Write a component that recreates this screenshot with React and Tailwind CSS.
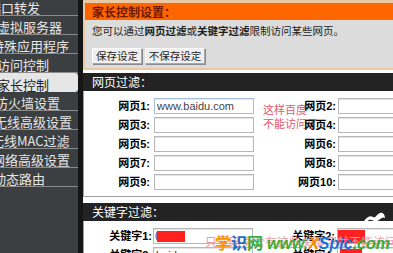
const items = [
  { t: '端口转发', o: '-ml-[12px]' },
  { t: '虚拟服务器', o: '-ml-[3px]' },
  { t: '特殊应用程序', o: '-ml-[9px]' },
  { t: '访问控制', o: '-ml-[3px]' },
  { t: '家长控制', o: '-ml-[3px]', active: true },
  { t: '防火墙设置', o: '-ml-[5px]' },
  { t: '无线高级设置', o: '-ml-[6px]' },
  { t: '无线MAC过滤', o: '-ml-[9px]' },
  { t: '网络高级设置', o: '-ml-[8px]' },
  { t: '动态路由', o: '-ml-[7px]' },
];

const webRows = [
  ['网页1:', '网页2:'],
  ['网页3:', '网页4:'],
  ['网页5:', '网页6:'],
  ['网页7:', '网页8:'],
  ['网页9:', '网页10:'],
];

const inputCls =
  'h-[16px] w-[100px] shrink-0 border border-[#b7b7b7] bg-white shadow-[inset_0_1px_1px_rgba(0,0,0,0.12)] flex items-center overflow-hidden';
const labelCls =
  "relative shrink-0 text-right text-[11px] font-bold leading-none text-black whitespace-nowrap font-['Liberation_Sans','Noto_Sans_CJK_SC',sans-serif]";

export default function App() {
  return (
    <div className="relative flex h-[253px] w-[393px] overflow-hidden bg-white font-['Noto_Sans_CJK_SC',sans-serif]">
      <aside className="w-[78px] shrink-0 overflow-hidden bg-[#3c3f41]">
        <ul className="-mt-[3px]">
          {items.map((it) => (
            <li
              key={it.t}
              className={
                it.active
                  ? 'flex h-[19px] items-center overflow-hidden whitespace-nowrap rounded-r-[3px] bg-[#e6e6e6] pt-[3px] text-[13px] leading-none text-[#222]'
                  : 'flex h-[19px] items-center overflow-hidden whitespace-nowrap border-b border-[#8b8b8b] pt-[3px] text-[13px] leading-none text-[#e6e6e6]'
              }
            >
              <span className={it.o}>{it.t}</span>
            </li>
          ))}
        </ul>
      </aside>
      <div className="w-[5px] shrink-0 bg-[#161616]" />
      <main className="min-w-0 flex-1 overflow-hidden">
        <div className="w-[420px]">
          <section className="border-b-2 border-l-2 border-t-[3px] border-[#e8c9a4]">
            <div className="flex h-[17px] items-center bg-[#ff6600] pl-[7px] text-[12px] font-bold leading-none text-[#6e1800]">
              家长控制设置：
            </div>
            <div className="h-[48px] bg-[#dcdcdc] pl-[7px] pt-[5px]">
              <p className="whitespace-nowrap text-[10.5px] leading-[12px] text-[#1e1e1e]">
                您可以通过<b>网页过滤</b>或<b>关键字过滤</b>限制访问某些网页。
              </p>
              <div className="mt-[11px] flex gap-[3px]">
                <div className="flex h-[16px] w-[50px] items-center justify-center border border-[#a8a8a8] border-l-white border-t-white bg-[#efefef] text-[10.5px] leading-none text-[#222] shadow-[1px_1px_0_#8a8a8a]">
                  保存设定
                </div>
                <div className="flex h-[16px] w-[60px] items-center justify-center border border-[#a8a8a8] border-l-white border-t-white bg-[#efefef] text-[10.5px] leading-none text-[#222] shadow-[1px_1px_0_#8a8a8a]">
                  不保存设定
                </div>
              </div>
            </div>
          </section>

          <section className="mt-[3px]">
            <div className="flex h-[18px] items-center bg-[#232323] pl-[9px] text-[12px] leading-none text-white">
              网页过滤：
            </div>
            <div className="relative flex flex-col gap-[3px] border-b border-l border-[#a0a0a0] pb-[6px] pt-[7px]">
              <div className="absolute left-[179px] top-[11px] whitespace-nowrap text-[11px] leading-[14px] text-[#e4576e]">
                <div>这样百度</div>
                <div>不能访问了</div>
              </div>
              {webRows.map(([a, b], i) => (
                <div key={a} className="flex h-[16px] items-center">
                  <span className={`${labelCls} w-[66px]`}>{a}</span>
                  <div
                    className={
                      i === 0
                        ? 'relative ml-[4px] flex h-[16px] w-[100px] shrink-0 items-center overflow-hidden border border-[#a6bdd6] bg-white shadow-[inset_0_1px_1px_rgba(0,0,0,0.1)]'
                        : `relative ml-[4px] ${inputCls}`
                    }
                  >
                    {i === 0 && (
                      <span className="pl-[2px] font-['Liberation_Sans',sans-serif] text-[11px] leading-none text-[#444]">
                        www.baidu.com
                      </span>
                    )}
                  </div>
                  <span className={`${labelCls} w-[82px]`}>{b}</span>
                  <div className={`relative ml-[2px] ${inputCls}`} />
                </div>
              ))}
            </div>
          </section>

          <section className="mt-[6px]">
            <div className="flex h-[18px] items-center bg-[#232323] pl-[9px] text-[12px] leading-none text-white">
              关键字过滤：
            </div>
            <div className="flex flex-col gap-[3px] border-l border-[#a0a0a0] pt-[7px]">
              <div className="flex h-[16px] items-center">
                <span className={`${labelCls} w-[68px]`}>关键字1:</span>
                <div className={`ml-[1px] ${inputCls} pl-[1px]`}>
                  <span className="font-['Liberation_Sans',sans-serif] text-[10px] leading-none text-[#333]">(</span>
                  <div className="ml-[-1px] h-[11px] w-[28px] bg-[#ff2020]" />
                </div>
                <span className={`${labelCls} w-[82px]`}>关键字2:</span>
                <div className={`ml-[2px] ${inputCls}`}>
                  <div className="h-[13px] w-[27px] bg-[#ff2020]" />
                </div>
              </div>
              <div className="flex h-[16px] items-center">
                <span className={`${labelCls} w-[68px]`}>关键字3:</span>
                <div className={`ml-[1px] ${inputCls} pl-[2px]`}>
                  <span className="font-['Liberation_Sans',sans-serif] text-[11px] leading-none text-[#333]">baidu</span>
                </div>
                <span className={`${labelCls} w-[82px]`}>关键字4:</span>
                <div className={`ml-[2px] ${inputCls} pl-[2px]`}>
                  <div className="h-[13px] w-[22px] bg-[#ff2020]" />
                </div>
              </div>
            </div>
          </section>
        </div>
      </main>

      {/* annotation + watermark overlay */}
      <div className="pointer-events-none absolute left-[205px] top-[235px] whitespace-nowrap text-[12px] leading-[14px] text-[#ee9aa6]">
        只要网页含有这些关键字就不能访问
      </div>
      <div className="pointer-events-none absolute left-[215px] top-[234px] flex whitespace-nowrap text-[16px] font-bold leading-[17px]">
        <span className="text-[#f39800]">学</span>
        <span className="text-[#1a6fc4]">识</span>
        <span className="text-[#3cae3c]">网</span>
      </div>
      <div className="pointer-events-none absolute left-[267px] top-[236px] whitespace-nowrap font-['Liberation_Sans',sans-serif] text-[16px] font-bold italic leading-[16px]">
        <span className="text-[#3faa35]">www.</span>
        <span className="text-[#f08c00]">X</span>
        <span className="text-[#1f6fd0]">Spic</span>
        <span className="text-[#3faa35]">.com</span>
      </div>
      <svg className="pointer-events-none absolute left-[362px] top-[211px]" width="24" height="14" viewBox="0 0 24 14">
        <path d="M1 12 C4 6 8 4 11 6 C13 8 15 3 18 2 C21 1 23 4 23 7 C20 5 18 9 15 10 C12 11 10 8 7 9 C5 10 3 12 1 12 Z" fill="#ffffff" />
      </svg>
    </div>
  );
}
